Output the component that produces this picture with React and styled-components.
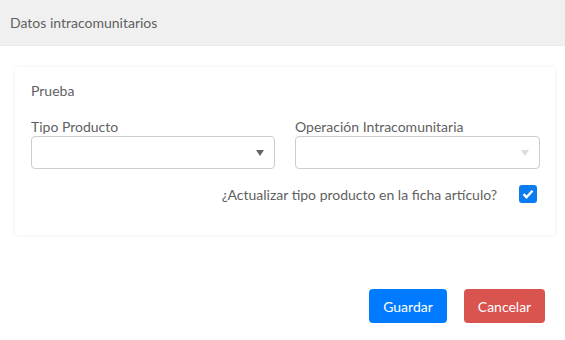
import React from 'react';
import styled, { createGlobalStyle } from 'styled-components';

const GlobalStyle = createGlobalStyle`
  body {
    margin: 0;
    background: #fff;
    font-family: Lato, "Liberation Sans", sans-serif;
    color: #5f5f5f;
  }
`;

const Modal = styled.div`
  width: 565px;
  height: 340px;
  display: flex;
  flex-direction: column;
`;

const Header = styled.div`
  height: 45px;
  background: #f0f0f0;
  border-bottom: 1px dotted #e4e4e4;
  display: flex;
  align-items: center;
  padding-left: 10px;
  font-size: 14px;
  color: #5f5f5f;
`;

const Body = styled.div`
  padding: 21px 10px 0 15px;
`;

const Card = styled.div`
  width: 540px;
  height: 168px;
  box-sizing: border-box;
  box-shadow: 0 0 3px rgba(0, 0, 0, 0.09);
  padding: 15px 16px 0 16px;
`;

const Title = styled.div`
  font-size: 14px;
  line-height: 17px;
  margin-bottom: 19px;
`;

const Row = styled.div`
  display: grid;
  grid-template-columns: 244px 245px;
  column-gap: 20px;
`;

const Field = styled.div`
  display: flex;
  flex-direction: column;
`;

const Label = styled.label`
  font-size: 14px;
  line-height: 17px;
  margin-bottom: 1px;
`;

const Select = styled.div`
  height: 33px;
  box-sizing: border-box;
  border: 1px solid #ccc;
  border-radius: 4px;
  display: flex;
  align-items: center;
  justify-content: flex-end;
  padding-right: 10px;
`;

const Caret = styled.span`
  width: 0;
  height: 0;
  border-left: 4px solid transparent;
  border-right: 4px solid transparent;
  border-top: 6px solid ${p => (p.$disabled ? '#ddd' : '#666')};
`;

const CheckRow = styled.div`
  display: flex;
  justify-content: flex-end;
  align-items: center;
  gap: 22px;
  margin-top: 16px;
  padding-right: 2px;
  font-size: 14px;
`;

const Check = styled.span`
  width: 18px;
  height: 18px;
  border-radius: 3px;
  background: #0a7cf2;
  display: flex;
  align-items: center;
  justify-content: center;
`;

const Footer = styled.div`
  display: flex;
  justify-content: flex-end;
  gap: 17px;
  padding: 54px 20px 0 0;
`;

const Button = styled.button`
  height: 34px;
  width: ${p => p.$w}px;
  padding: 0;
  border: none;
  border-radius: 4px;
  font-family: Lato, "Liberation Sans", sans-serif;
  font-size: 14px;
  color: #fff;
  background: ${p => (p.$danger ? '#d9534f' : '#007bff')};
`;

export default function App() {
  return (
    <Modal>
      <GlobalStyle />
      <Header>Datos intracomunitarios</Header>
      <Body>
        <Card>
          <Title>Prueba</Title>
          <Row>
            <Field>
              <Label>Tipo Producto</Label>
              <Select>
                <Caret />
              </Select>
            </Field>
            <Field>
              <Label>Operación Intracomunitaria</Label>
              <Select>
                <Caret $disabled />
              </Select>
            </Field>
          </Row>
          <CheckRow>
            <span>¿Actualizar tipo producto en la ficha artículo?</span>
            <Check>
              <svg width="12" height="10" viewBox="0 0 12 10">
                <path d="M1.5 5.2 L4.5 8.2 L10.5 1.8" fill="none" stroke="#fff" strokeWidth="2.4" />
              </svg>
            </Check>
          </CheckRow>
        </Card>
      </Body>
      <Footer>
        <Button $w={78}>Guardar</Button>
        <Button $w={81} $danger>Cancelar</Button>
      </Footer>
    </Modal>
  );
}
